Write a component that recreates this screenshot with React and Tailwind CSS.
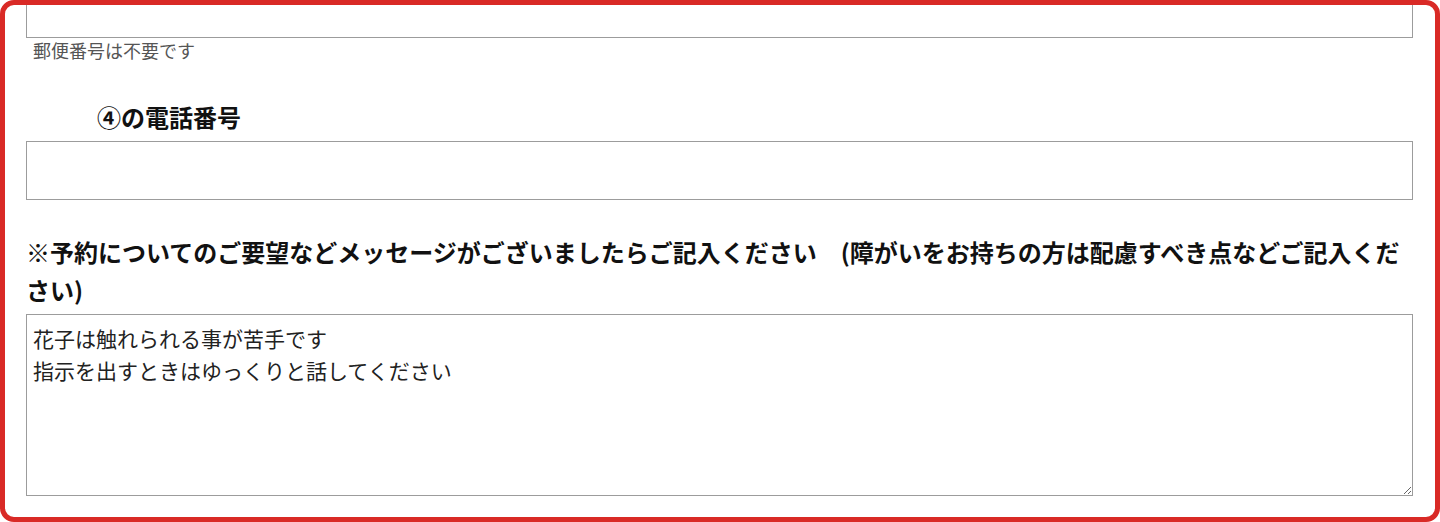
import React from "react";

const jp = "font-['Meiryo','Noto_Sans_CJK_JP',sans-serif]";

export default function App() {
  return (
    <div className={`h-[522px] w-[1440px] overflow-hidden bg-white ${jp}`}>
      <div className="h-full overflow-hidden rounded-[14px] border-[5px] border-[#d92a26] bg-white">
        <div className="-mt-[20px] pl-[21px] pr-[22px]">
          <div className="h-[53px] border border-[#9c9c9c] bg-white" />
          <p className="pl-[7px] text-[18px] leading-[24px] text-[#555]">
            郵便番号は不要です
          </p>

          <h3 className="mt-[38px] pl-[71px] text-[24px] font-bold leading-[34px] text-[#111]">
            ④の電話番号
          </h3>
          <div className="mt-[7px] h-[59px] border border-[#9c9c9c] bg-white" />

          <h3 className="mt-[33px] text-[24px] font-bold leading-[38px] text-[#111]">
            ※予約についてのご要望などメッセージがございましたらご記入ください　(障がいをお持ちの方は配慮すべき点などご記入ください)
          </h3>
          <textarea
            readOnly
            defaultValue={"花子は触れられる事が苦手です\n指示を出すときはゆっくりと話してください"}
            className={`mt-[5px] block h-[182px] w-full resize border border-[#9c9c9c] bg-white px-[6px] py-[7px] text-[21px] leading-[32px] text-[#222] outline-none ${jp}`}
          />
        </div>
      </div>
    </div>
  );
}
